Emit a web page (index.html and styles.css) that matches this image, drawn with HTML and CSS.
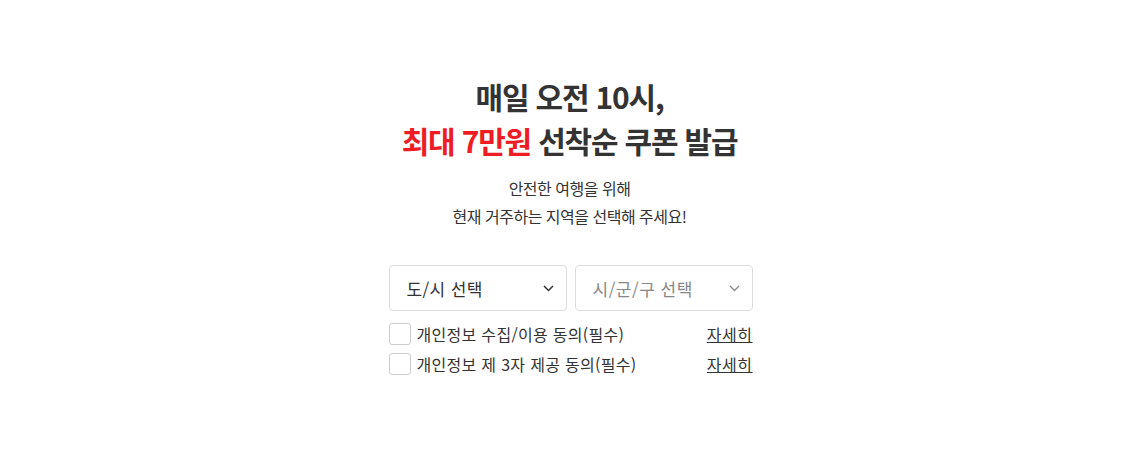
FILE: index.html
```html
<!DOCTYPE html>
<html lang="ko">
<head>
    <meta charset="UTF-8">
    <meta name="viewport" content="width=device-width, initial-scale=1.0">
    <title>선착순 쿠폰 발급</title>
    <link rel="stylesheet" href="styles.css">
</head>
<body>
    <div class="container">
        <h1 class="title">매일 오전 10시,<br><span class="highlight">최대 7만원</span> 선착순 쿠폰 발급</h1>
        <p class="desc">안전한 여행을 위해<br>현재 거주하는 지역을 선택해 주세요!</p>

        <div class="form">
            <div class="select-row">
                <div class="select">
                    <span>도/시 선택</span>
                    <svg class="chevron" width="11" height="7" viewBox="0 0 11 7"><path d="M1 1l4.5 4.5L10 1" fill="none" stroke="#333" stroke-width="1.5"/></svg>
                </div>
                <div class="select disabled">
                    <span>시/군/구 선택</span>
                    <svg class="chevron" width="11" height="7" viewBox="0 0 11 7"><path d="M1 1l4.5 4.5L10 1" fill="none" stroke="#888" stroke-width="1.3"/></svg>
                </div>
            </div>

            <div class="agree-row">
                <label class="agree">
                    <span class="checkbox"></span>
                    개인정보 수집/이용 동의(필수)
                </label>
                <a href="#" class="detail">자세히</a>
            </div>
            <div class="agree-row">
                <label class="agree">
                    <span class="checkbox"></span>
                    개인정보 제 3자 제공 동의(필수)
                </label>
                <a href="#" class="detail">자세히</a>
            </div>
        </div>
    </div>
</body>
</html>
```

FILE: styles.css
```css
body {
    margin: 0;
    background-color: #fff;
    color: #333;
    font-family: 'Noto Sans CJK KR', 'Noto Sans', sans-serif;
}
.container {
    padding-top: 74px;
    text-align: center;
}
.title {
    margin: 0;
    font-size: 30px;
    line-height: 44px;
    font-weight: 700;
    letter-spacing: -1.2px;
    color: #333;
}
.highlight {
    color: #ee1c25;
}
.desc {
    margin: 12px 0 0;
    font-size: 16px;
    line-height: 28px;
    letter-spacing: -0.5px;
    color: #333;
}
.form {
    width: 364px;
    margin: 35px 0 0 calc(50% - 181px);
    text-align: left;
}
.select-row {
    display: flex;
    gap: 8px;
}
.select {
    flex: 1;
    height: 46px;
    box-sizing: border-box;
    border: 1px solid #ddd;
    border-radius: 4px;
    padding: 0 12px 0 17px;
    display: flex;
    align-items: center;
    justify-content: space-between;
    font-size: 17px;
    letter-spacing: 0.4px;
    color: #333;
}
.select.disabled {
    color: #888;
    letter-spacing: 0.5px;
}
.agree-row {
    display: flex;
    align-items: center;
    justify-content: space-between;
    height: 22px;
    margin-top: 8px;
}
.select-row + .agree-row {
    margin-top: 12px;
}
.agree {
    display: flex;
    align-items: center;
    gap: 6px;
    font-size: 16px;
    line-height: 22px;
    letter-spacing: 0.3px;
    color: #333;
}
.checkbox {
    width: 22px;
    height: 22px;
    box-sizing: border-box;
    border: 1px solid #ccc;
    border-radius: 3px;
}
.detail {
    font-size: 16px;
    line-height: 22px;
    letter-spacing: 0.5px;
    color: #333;
    text-decoration: underline;
}
```
